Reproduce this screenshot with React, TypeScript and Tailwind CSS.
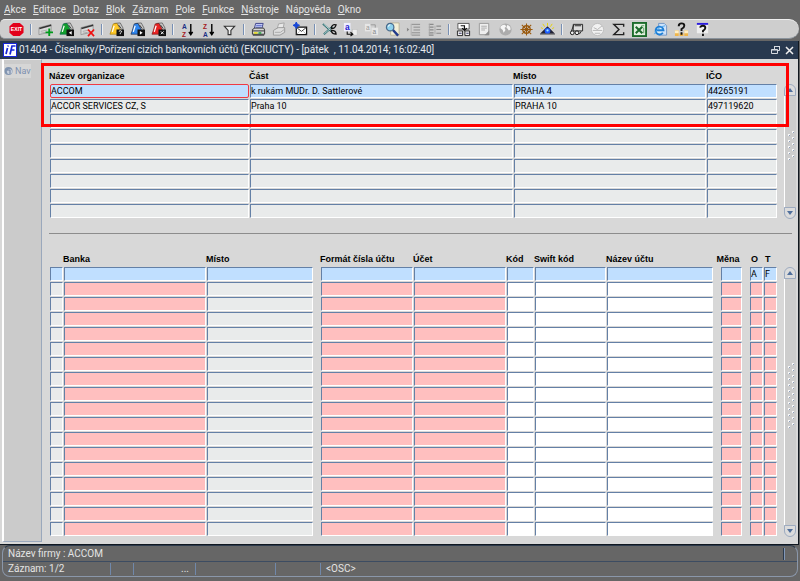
import { Fragment, ReactNode } from 'react';
import { clsx } from 'clsx';

interface MenuEntry {
  before?: string;
  key: string;
  after: string;
}

const menu: MenuEntry[] = [
  { key: 'A', after: 'kce' },
  { key: 'E', after: 'ditace' },
  { key: 'D', after: 'otaz' },
  { key: 'B', after: 'lok' },
  { key: 'Z', after: 'áznam' },
  { key: 'P', after: 'ole' },
  { key: 'F', after: 'unkce' },
  { key: 'N', after: 'ástroje' },
  { before: 'Náp', key: 'o', after: 'věda' },
  { key: 'O', after: 'kno' },
];

const Card = () => (
  <>
    <path d="M1 6 14 2.500v8L1 13.500z" fill="#d8d8d8" stroke="#9a9a9a" />
    <path d="M1.500 7 14 3.500" stroke="#333" strokeWidth="1.600" />
    <path d="M3 10l7-1.500M3 12l5-1" stroke="#aaa" />
  </>
);

const Flash = ({ color, dark }: { color: string; dark: string }) => (
  <>
    <path d="M6 1.500 12 1l3 5.500-1 3H7z" fill="#c9c9c9" stroke="#555" strokeWidth=".8" />
    <path d="M4.500 2 8.500 1.500 12 8 9 13H1l1.500-4z" fill={color} stroke={dark} strokeWidth=".7" />
    <path d="M10 3l3 4" stroke="#333" />
    <path d="M5.500 4 3.500 10.500" stroke="#fff" strokeWidth="1.300" />
    <rect x="8" y="8" width="8" height="7" fill="#111" />
  </>
);

const SortIcon = ({ top, bottom, topFill, bottomFill }: { top: string; bottom: string; topFill: string; bottomFill: string }) => (
  <>
    <text x="2" y="7" fontSize="7" fontWeight="bold" fill={topFill} fontFamily="Liberation Sans">{top}</text>
    <text x="2" y="15.500" fontSize="7" fontWeight="bold" fill={bottomFill} fontFamily="Liberation Sans">{bottom}</text>
    <path d="M11.500 2v11M9.500 10.500l2 3 2-3" stroke="#000" strokeWidth="1.500" />
  </>
);

const groups: { label: string; art: ReactNode }[][] = [
  [
    {
      label: 'Konec',
      art: (
        <>
          <path d="M4.500 1h7L15.500 4.500v7L11.500 15h-7L.5 11.500v-7z" fill="#e3001b" />
          <text x="8" y="10" fontSize="5.500" fontWeight="bold" fill="#fff" textAnchor="middle" fontFamily="Liberation Sans">EXIT</text>
        </>
      ),
    },
  ],
  [
    { label: 'Vložit záznam', art: <><Card /><path d="M12 7v8M8 11h8" stroke="#009a1c" strokeWidth="2" /></> },
    {
      label: 'Uložit',
      art: <><Flash color="#12a02c" dark="#064" /><path d="M13.500 9.500v4l-3-2z" fill="#fff" /></>,
    },
    { label: 'Smazat záznam', art: <><Card /><path d="M8.500 8 15 15M15 8l-6.500 7" stroke="#f01010" strokeWidth="1.800" /></> },
  ],
  [
    {
      label: 'Zadat dotaz',
      art: <><Flash color="#ffc928" dark="#a57800" /><path d="M10.500 10q1.500-1.500 3 0 0 1-1.500 2v1" stroke="#fff" /></>,
    },
    { label: 'Provést dotaz', art: <><Flash color="#2f86ee" dark="#124" /><path d="M10.500 9.500v4l3-2z" fill="#fff" /></> },
    { label: 'Zrušit dotaz', art: <><Flash color="#ea2424" dark="#711" /><path d="m10.500 10 3 3m0-3-3 3" stroke="#fff" /></> },
  ],
  [
    { label: 'Třídit vzestupně', art: <SortIcon top="A" bottom="Z" topFill="#1b2f86" bottomFill="#a31621" /> },
    { label: 'Třídit sestupně', art: <SortIcon top="Z" bottom="A" topFill="#a31621" bottomFill="#1b2f86" /> },
    { label: 'Filtr', art: <path d="M2.500 4.500h11L9.500 9v4.500h-3V9z" fill="#eee" stroke="#333" strokeWidth="1.200" /> },
  ],
  [
    {
      label: 'Tisk',
      art: (
        <>
          <path d="M5 1.500h8L11.500 7H3.500z" fill="#dfe4ff" stroke="#3a3f8a" />
          <path d="M5.500 3.500h6M5 5.500h6" stroke="#4455c0" />
          <path d="M1.500 8 4 6.500h9.500l1 2v4.500h-13z" fill="#d8d8d8" stroke="#333" />
          <path d="M2 14h12M2 9.500h12" stroke="#222" />
          <path d="M3 11.700h4" stroke="#eee000" strokeWidth="1.500" />
          <path d="M8 11.700h3" stroke="#16a030" strokeWidth="1.500" />
        </>
      ),
    },
    {
      label: 'Nastavení tisku',
      art: (
        <>
          <path d="m7 2 6-1-1 5-7 3z" fill="#e8e8e8" stroke="#a5a5a5" />
          <path d="m1.500 9 5-3h7v5l-5 3h-7z" fill="#ddd" stroke="#999" />
          <path d="M3 11h6l4-3" stroke="#aaa" />
        </>
      ),
    },
    {
      label: 'Pošta',
      art: (
        <>
          <path d="M3.500 5.500h11v8h-11z" fill="#fff" stroke="#111" strokeWidth="1.300" />
          <path d="m4 6 5 4 5-4" stroke="#333" />
          <path d="m4 13 3-3M14 13l-3-3" stroke="#aaa" strokeWidth=".8" />
          <path d="m3.500 0 1.200 2.500L7 3.500 4.700 4.700 3.500 7 2.300 4.700 0 3.500l2.300-1z" fill="#1747d8" stroke="#1747d8" />
        </>
      ),
    },
  ],
  [
    {
      label: 'Vyjmout',
      art: (
        <>
          <path d="m1 2 9 8M2 13l9-8" stroke="#2c6a6e" strokeWidth="2" />
          <path d="m1.500 2 8 7M2.500 12.500l7-6" stroke="#d8efef" strokeWidth=".8" />
          <path d="M10 6q1-4 5-3-1 4-5 4zM10 9q5 0 5 4-4 0-5-3z" stroke="#111" strokeWidth="1.400" />
        </>
      ),
    },
    {
      label: 'Kopírovat',
      art: (
        <>
          <rect x="1" y="1" width="7" height="9" fill="#eef" />
          <text x="2" y="8" fontSize="9" fontWeight="bold" fill="#2020d0" fontFamily="Liberation Sans">a</text>
          <rect x="10" y="8" width="5" height="6" fill="#eee" stroke="#bbb" strokeWidth=".5" />
          <path d="M4.500 10v3H10M8 11l2.500 2L8 15" stroke="#111" strokeWidth="1.200" />
        </>
      ),
    },
    {
      label: 'Vložit',
      art: (
        <>
          <rect x="1" y="2" width="6" height="8" fill="#e6e6e6" />
          <text x="2" y="8" fontSize="7" fill="#999" fontFamily="Liberation Sans">a</text>
          <rect x="8" y="6" width="7" height="8" fill="#e6e6e6" />
          <text x="9" y="13" fontSize="7" fill="#888" fontFamily="Liberation Sans">a</text>
          <path d="M7 3h5v3" stroke="#999" />
        </>
      ),
    },
    {
      label: 'Hledat',
      art: (
        <>
          <path d="M6 1h9v13H6z" fill="#f3efd9" stroke="#b0a880" strokeWidth=".7" />
          <path d="m8 8 6 6.500" stroke="#223a8a" strokeWidth="2.600" />
          <circle cx="5.500" cy="5.500" r="4" fill="#8fd2ee" stroke="#4a6a8a" strokeWidth="1.300" />
          <path d="M3.500 5q0-2 2-2" stroke="#fff" />
        </>
      ),
    },
    {
      label: 'Rozbalit',
      art: <><path d="M6 2.500h9M8 5.500h7M8 8.500h7M6 11.500h9M6 14h9" stroke="#8b8b8b" /><path d="M1 6 3.500 8 1 10z" fill="#888" /><path d="M5.500 2v12" stroke="#aaa" strokeWidth=".8" /></>,
    },
    {
      label: 'Sbalit',
      art: <><path d="M2 2.500h5M2 5.500h5M2 8.500h5M2 11.500h5M2 14h5M10 4.500h5M10 8h5M10 12h5" stroke="#8b8b8b" strokeWidth="1.300" /><path d="M2.500 2v12M8.500 4v9" stroke="#aaa" /></>,
    },
  ],
  [
    {
      label: 'Seznam hodnot',
      art: (
        <>
          <path d="M2 1.500h12v6H2z" fill="#fff" stroke="#555" />
          <path d="M5 4h4v4M6.500 6.500 9 9l2.500-2.500" stroke="#111" strokeWidth="1.300" />
          <path d="M1.500 9.500h5.500v5h-5.500zM9.500 9.500h5v5h-5z" fill="#eee" stroke="#222" />
          <path d="M3 12h3M11 12h2.500" stroke="#336" />
        </>
      ),
    },
    {
      label: 'Poznámka',
      art: (
        <>
          <path d="M2.500 1.500h10v12h-10z" fill="#eee" stroke="#999" />
          <path d="M4.500 4.500h6M4.500 6.500h6M4.500 8.500h4" stroke="#aaa" />
          <path d="m8 14 5-5v5z" fill="#8c8c8c" />
        </>
      ),
    },
    {
      label: 'Web',
      art: (
        <>
          <circle cx="8" cy="8" r="6.500" fill="#acacac" />
          <path d="M3 4.500q2-2 4-1.500l2 1.500-2 2 1 2-2 3-1-3-2.500-2zM10 3l3 2 .5 3-2 1-1.500-2-1-1z" fill="#f6f6f6" />
        </>
      ),
    },
    {
      label: 'Řízení',
      art: (
        <>
          <circle cx="8" cy="8" r="4" stroke="#99590d" strokeWidth="1.600" />
          <circle cx="8" cy="8" r="1.500" fill="#6b3b05" />
          <path d="M8 1.500v13M1.500 8h13M3 3l10 10M13 3 3 13" stroke="#99590d" strokeWidth="1.100" />
        </>
      ),
    },
    {
      label: 'Náhled',
      art: (
        <>
          <path d="M3 2 5 5M8 1v3M13 2l-2 3M1 6l2 1M15 6l-2 1" stroke="#e8d200" />
          <path d="m0 12.500 8-8 8 8z" fill="#223" />
          <circle cx="8" cy="9.500" r="3" fill="#1d5cff" />
          <circle cx="8" cy="9" r="1.200" fill="#9fe6ff" />
          <path d="M0 13h16" stroke="#666" />
        </>
      ),
    },
  ],
  [
    {
      label: 'Doprava',
      art: (
        <>
          <path d="M4.500 2.500h10v7h-10z" fill="#ddd" stroke="#222" />
          <path d="M6 4h7M13 10l-2 3M5 3 2.500 10" stroke="#222" />
          <circle cx="3.500" cy="11.500" r="2" fill="#eee" stroke="#111" />
          <circle cx="8.500" cy="11.500" r="2" fill="#eee" stroke="#111" />
        </>
      ),
    },
    {
      label: 'Čas',
      art: (
        <>
          <circle cx="8" cy="8" r="6.500" fill="#f2f2f2" stroke="#bdbdbd" />
          <path d="m4 6 4 2 5-4M3 9h10M5 12h6" stroke="#b4b4b4" />
        </>
      ),
    },
    { label: 'Součet', art: <path d="M13.500 5V2.500H3L8.500 8 3 13.500h10.500V11" stroke="#222" strokeWidth="1.500" /> },
    {
      label: 'Excel',
      art: (
        <>
          <rect x="1" y="1" width="14" height="14" fill="#e2f0e0" stroke="#1b6b2b" strokeWidth="2" />
          <path d="m4 5 7 7M11 5l-7 7" stroke="#1b6b2b" strokeWidth="2.200" />
          <path d="M10 4h3M12.500 6v6" stroke="#5a9a62" />
        </>
      ),
    },
    {
      label: 'Internet',
      art: (
        <>
          <path d="M6 1.500h6l2.500 2.500v10H6z" fill="#cfe3fa" stroke="#6f94c4" />
          <path d="M10.500 11.500a4.200 4.200 0 1 1 .7-2.700H3.500" fill="#d8eefc" stroke="#1f7fd6" strokeWidth="2" />
          <path d="M1.500 13Q5 5 13 4" stroke="#4aa2ea" />
        </>
      ),
    },
    {
      label: 'Kdo je kdo',
      art: (
        <>
          <path d="M1 9h4v6H1zM11 9h4v6h-4zM6 12h4v3H6z" fill="#f0b548" />
          <path d="M1 9h4v3H1zM11 9h4v3h-4z" fill="#fff0c8" />
          <path d="M5 4.500q0-3 3-3t3 2.500q0 2-3 3.500v2M8 11v2.500" stroke="#111" strokeWidth="2" />
        </>
      ),
    },
    {
      label: 'Nápověda',
      art: (
        <>
          <path d="M2 3h12v9H2z" fill="#eee" />
          <path d="M2 2h12" stroke="#2b1be0" strokeWidth="2" />
          <path d="M5.500 6q.5-2 3-2t2.500 2.500q0 1.500-2.500 3v1.500M8.500 12.500v2.500" stroke="#111" strokeWidth="2" />
        </>
      ),
    },
  ],
];

const CONTACT_ROWS = 9;
const ACCOUNT_ROWS = 18;

const contactColumns = [
  { title: 'Název organizace', width: 'w-[200px]' },
  { title: 'Část', width: 'w-[264px]' },
  { title: 'Místo', width: 'w-[193px]' },
  { title: 'IČO', width: 'w-[71px]' },
];

const contacts = [
  ['ACCOM', 'k rukám MUDr. D. Sattlerové', 'PRAHA 4', '44265191'],
  ['ACCOR SERVICES CZ, S', 'Praha 10', 'PRAHA 10', '497119620'],
];

// gap marks the last column of a block, which leaves some room on its right
const accountColumns = [
  { title: '', width: 'w-[14px]', fill: 'bg-[#e9ebeb]' },
  { title: 'Banka', width: 'w-[143px]', fill: 'bg-[#ffbfbf]' },
  { title: 'Místo', width: 'w-[114px]', fill: 'bg-[#e9ebeb]', gap: true },
  { title: 'Formát čísla účtu', width: 'w-[93px]', fill: 'bg-[#ffbfbf]' },
  { title: 'Účet', width: 'w-[93px]', fill: 'bg-[#ffbfbf]' },
  { title: 'Kód', width: 'w-[28px]', fill: 'bg-white' },
  { title: 'Swift kód', width: 'w-[72px]', fill: 'bg-white' },
  { title: 'Název účtu', width: 'w-[114px]', fill: 'bg-white', gap: true },
  { title: 'Měna', width: 'w-[29px]', fill: 'bg-[#ffbfbf]', gap: true, align: 'flex w-4 justify-center' },
  { title: 'O', width: 'w-[14px]', fill: 'bg-[#ffbfbf]', first: 'A', align: 'pl-[2px]' },
  { title: 'T', width: 'w-[14px]', fill: 'bg-[#ffbfbf]', first: 'F', align: 'pl-[2px]' },
];

const headingClass = "h-[17px] p-0 text-left font-['Liberation_Sans',sans-serif] text-[9px] leading-3 font-bold whitespace-nowrap";

interface CellProps {
  label: string;
  value?: string;
  fill: string;
  focused?: boolean;
  gap?: boolean;
}

const Cell = ({ label, value = '', fill, focused, gap }: CellProps) => (
  <td className={clsx('p-0 pb-px pl-px', gap && 'pr-[7px]')}>
    <input
      type="text"
      aria-label={label}
      defaultValue={value}
      className={clsx(
        'block h-[14px] w-full border p-0 text-[9px] leading-3 text-black outline-none',
        focused ? 'rounded-xs border-[#f03a44]' : 'border-t-[#6480a6] border-r-white border-b-white border-l-[#6480a6]',
        fill
      )}
    />
  </td>
);

const Grip = ({ rows }: { rows: number }) => (
  <svg width="8" height={rows * 3} aria-hidden="true">
    {Array.from({ length: rows }, (_, i) => (
      <Fragment key={i}>
        <rect x={i % 2 ? 1 : 5} y={i * 3} width="2" height="2" fill="#f8f8f8" />
        <rect x={i % 2 ? 2 : 6} y={i * 3 + 1} width="1" height="1" fill="#8fa0bb" />
      </Fragment>
    ))}
  </svg>
);

const ScrollBar = ({ grip }: { grip: number }) => (
  <div className="flex w-3 flex-col">
    <button aria-label="Nahoru" className="flex h-3 items-center justify-center rounded-t-md border border-[#9dabc0] bg-[#dcdcdc]">
      <svg width="6" height="4" aria-hidden="true"><path d="M3 0 6 4H0z" fill="#4f6f9c" /></svg>
    </button>
    <div className="flex flex-1 items-center justify-center border-l border-white bg-[#cdcdcd] pb-3">
      <Grip rows={grip} />
    </div>
    <button aria-label="Dolů" className="flex h-3 items-center justify-center rounded-b-md border border-[#9dabc0] bg-[#dcdcdc]">
      <svg width="6" height="4" aria-hidden="true"><path d="M0 0h6L3 4z" fill="#4f6f9c" /></svg>
    </button>
  </div>
);

const MenuBar = () => (
  <nav className="flex h-[19px] items-center gap-[7px] px-1 text-[10px] text-[#e4e4e4]">
    {menu.map((item) => (
      <button key={item.key + item.after} className="leading-3">
        {item.before}
        <span className="underline underline-offset-1">{item.key}</span>
        {item.after}
      </button>
    ))}
  </nav>
);

const ToolBar = () => (
  <div className="mr-px flex h-5 items-center rounded-r-xl rounded-l-md border-t border-b border-t-[#efefef] border-b-[#8a939c] bg-[#cecece] pl-[6px]">
    {groups.map((group, i) => (
      <Fragment key={i}>
        {i > 0 && (
          <div className="flex w-2 justify-center">
            <div className="h-[11px] w-[2px] border-l border-[#7890b4] bg-[#eee]" />
          </div>
        )}
        {group.map((tool) => (
          <button key={tool.label} aria-label={tool.label} className="flex w-[21px] justify-center">
            <svg width="15" height="15" viewBox="0 0 16 16" fill="none" aria-hidden="true">{tool.art}</svg>
          </button>
        ))}
      </Fragment>
    ))}
  </div>
);

const TitleBar = () => (
  <header className="flex h-[18px] items-center bg-[#28394f] pr-1 pl-[3px] text-[#e6e9ee]">
    <svg width="14" height="14" viewBox="0 0 14 14" aria-hidden="true">
      <rect width="14" height="14" fill="#fff" />
      <rect x=".5" y=".5" width="13" height="13" fill="none" stroke="#1626d8" />
      <path d="M4.500 5 3 11M5.200 2.500 5 3.500M7 11.500 9 3h3.500M8 7h3.500" fill="none" stroke="#1626d8" strokeWidth="1.700" />
    </svg>
    <h1 className="ml-[2px] flex-1 text-[10px] leading-4 whitespace-pre">
      01404 - Číselníky/Pořízení cizích bankovních účtů (EKCIUCTY) - [pátek  , 11.04.2014; 16:02:40]
    </h1>
    <div className="flex items-center gap-1">
      <button aria-label="Obnovit okno">
        <svg width="10" height="10" viewBox="0 0 10 10" fill="none" stroke="#d6dae0" aria-hidden="true">
          <path d="M3.500 4V1.500h5v4H6.500M3 1.500h6M.5 4.500h6v4h-6zM.5 5h6" />
        </svg>
      </button>
      <button aria-label="Zavřít okno">
        <svg width="9" height="9" viewBox="0 0 9 9" fill="none" stroke="#f0f0f0" strokeWidth="1.500" aria-hidden="true">
          <path d="m1 1 7 7M8 1 1 8" />
        </svg>
      </button>
    </div>
  </header>
);

const ContactTable = () => (
  <div className="flex items-end gap-[7px]">
    <table className="w-full table-fixed border-collapse">
      <thead>
        <tr>
          {contactColumns.map((col) => (
            <th key={col.title} className={clsx(headingClass, col.width)}>
              {col.title}
            </th>
          ))}
        </tr>
      </thead>
      <tbody>
        {Array.from({ length: CONTACT_ROWS }, (_, row) => (
          <tr key={row}>
            {contactColumns.map((col, i) => (
              <Cell
                key={col.title}
                label={`${col.title} ${row + 1}`}
                value={contacts[row]?.[i]}
                fill={row === 0 ? 'bg-[#c0dfff]' : 'bg-[#e9ebeb]'}
                focused={row === 0 && i === 0}
              />
            ))}
          </tr>
        ))}
      </tbody>
    </table>
    <div className="flex h-[135px]">
      <ScrollBar grip={10} />
    </div>
  </div>
);

const AccountTable = () => (
  <div className="flex items-end gap-[7px]">
    <table className="w-full table-fixed border-collapse">
      <thead>
        <tr>
          {accountColumns.map((col, i) => (
            <th key={i} className={clsx(headingClass, col.width)}>
              <div className={col.align}>{col.title}</div>
            </th>
          ))}
        </tr>
      </thead>
      <tbody>
        {Array.from({ length: ACCOUNT_ROWS }, (_, row) => (
          <tr key={row}>
            {accountColumns.map((col, i) => (
              <Cell
                key={i}
                label={`${col.title || 'Výběr'} ${row + 1}`}
                value={row === 0 ? col.first : undefined}
                fill={row === 0 ? 'bg-[#c0dfff]' : col.fill}
                gap={col.gap}
              />
            ))}
          </tr>
        ))}
      </tbody>
    </table>
    <div className="flex h-[270px]">
      <ScrollBar grip={22} />
    </div>
  </div>
);

const StatusBar = () => (
  <footer className="mx-[2px] mb-1 rounded-lg border border-[#8a97aa] border-t-[#2c3a4c] text-[10px] leading-3 text-[#e4e4e4]">
    <div className="flex h-4 items-center justify-between border-b border-[#3c4c62] pr-3 pl-[5px]">
      <span>Název firmy : ACCOM</span>
      <span className="h-3 w-[2px] border-l border-[#2c3a4c] bg-[#8298b8]" />
    </div>
    <div className="flex h-[14px] items-center *:h-3 *:border-[#7088aa]">
      <span className="w-[108px] border-r pl-[5px]">Záznam: 1/2</span>
      <span className="w-[23px] border-r" />
      <span className="w-[62px] border-r pr-[6px] text-right">...</span>
      <span className="w-[80px] border-r" />
      <span className="w-[45px] border-r" />
      <span className="pl-[5px]">&lt;OSC&gt;</span>
    </div>
  </footer>
);

export default function App() {
  return (
    <div className="flex min-h-screen flex-col bg-[#666666] font-[Roboto,'Liberation_Sans',sans-serif] text-black">
      <MenuBar />
      <ToolBar />
      <div className="mt-[2px] mr-px flex flex-1 flex-col border-r border-b border-[#111820] bg-[#d8d8d8]">
        <TitleBar />
        <main className="flex flex-1">
          <aside className="mb-[2px] ml-[2px] w-10 shrink-0 border-t border-r border-b border-l-2 border-t-[#eee] border-r-[#9aa8bc] border-b-[#9aa8bc] border-l-white bg-[#cbcbcb] pt-1">
            <button className="flex h-[14px] w-[27px] items-center gap-[2px] bg-[#d6d6d6] text-[9px] leading-3 text-[#7d90b0]">
              <svg width="9" height="9" viewBox="0 0 9 9" className="shrink-0" aria-hidden="true">
                <circle cx="4.500" cy="4" r="4" fill="#8094b0" />
                <circle cx="5.500" cy="4.500" r="2.600" fill="#c6cfdd" />
                <path d="M3 3h3v4" fill="none" stroke="#6a7f9f" />
              </svg>
              Nav
            </button>
          </aside>
          <section className="relative flex-1 pt-2 pr-[2px] pb-[6px] pl-[7px]">
            <ContactTable />
            <hr className="mt-[14px] mr-1 mb-4 border-t border-[#8c8c8c]" />
            <AccountTable />
            <div className="pointer-events-none absolute top-1 right-[9px] -left-px h-16 border-3 border-[#ff0000]" />
          </section>
        </main>
      </div>
      <StatusBar />
    </div>
  );
}
